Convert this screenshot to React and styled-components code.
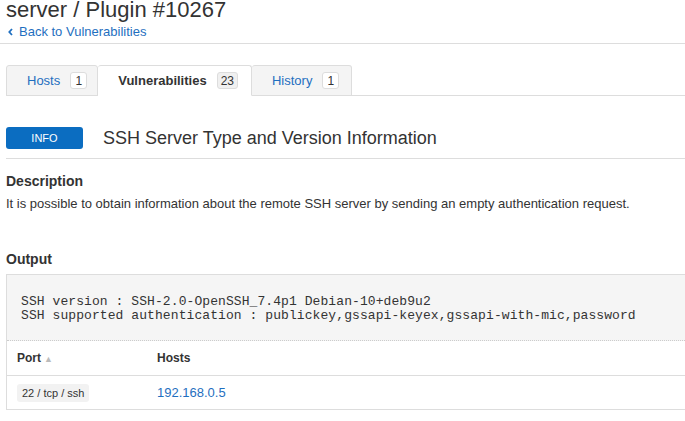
import React from "react";
import styled, { createGlobalStyle } from "styled-components";

const GlobalStyle = createGlobalStyle`
  html, body {
    margin: 0;
    padding: 0;
    background: #fff;
    font-family: "Liberation Sans", Arial, sans-serif;
    color: #333;
    overflow: hidden;
  }
`;

const Page = styled.div`
  width: 685px;
  height: 421px;
  overflow: hidden;
`;

const Header = styled.div`
  display: flow-root;
  padding: 0 6px;
  height: 44px;
  box-sizing: border-box;
  border-bottom: 1px solid #ddd;
`;

const Title = styled.h1`
  margin: -3px 0 0;
  font-size: 22px;
  line-height: 26px;
  font-weight: normal;
  color: #333;
`;

const BackLink = styled.a`
  display: flex;
  align-items: center;
  gap: 6px;
  margin-top: 1px;
  padding-left: 2px;
  font-size: 13px;
  line-height: 15px;
  color: #1f6fc0;
  text-decoration: none;
`;

const Content = styled.div`
  padding: 21px 0 0 6px;
`;

const Tabs = styled.div`
  display: flex;
  border-bottom: 1px solid #ddd;
`;

const Tab = styled.div`
  display: flex;
  align-items: center;
  height: 31px;
  margin-bottom: -1px;
  padding: 0 ${(p) => (p.$first ? "10px" : p.$active ? "13px" : "12px")} 0 20px;
  box-sizing: border-box;
  background: ${(p) => (p.$active ? "#fff" : "#f4f4f4")};
  border: 1px solid #ddd;
  border-bottom-color: ${(p) => (p.$active ? "#fff" : "#ddd")};
  border-left-width: ${(p) => (p.$first ? "1px" : "0")};
  border-radius: 3px 3px 0 0;
  font-size: 13px;
  color: ${(p) => (p.$active ? "#333" : "#1f6fc0")};
  font-weight: ${(p) => (p.$active ? "bold" : "normal")};
`;

const Count = styled.span`
  display: inline-flex;
  align-items: center;
  justify-content: center;
  margin-left: 10px;
  min-width: 17px;
  height: 17px;
  padding: 0 3px;
  box-sizing: border-box;
  border: 1px solid #ddd;
  border-radius: 3px;
  background: ${(p) => (p.$active ? "#f0f0f0" : "#fff")};
  font-size: 12px;
  font-weight: normal;
  color: #333;
`;

const VulnHeader = styled.div`
  display: flex;
  align-items: center;
  gap: 20px;
  padding: 31px 0 9px;
  border-bottom: 1px solid #ddd;
`;

const Severity = styled.span`
  display: inline-flex;
  align-items: center;
  justify-content: center;
  width: 77px;
  height: 22px;
  border-radius: 3px;
  background: #0b6dc1;
  color: #fff;
  font-size: 11px;
`;

const VulnTitle = styled.h2`
  margin: 0;
  font-size: 18px;
  font-weight: normal;
  color: #333;
`;

const SectionTitle = styled.h3`
  margin: ${(p) => p.$top || "14px"} 0 0;
  font-size: 14px;
  line-height: 16px;
  font-weight: bold;
  color: #333;
`;

const Paragraph = styled.p`
  margin: 7px 0 0;
  font-size: 13px;
  line-height: 16px;
`;

const OutputBox = styled.div`
  margin-top: 7px;
  border-top: 1px solid #ddd;
  border-left: 1px solid #ddd;
`;

const Pre = styled.pre`
  margin: 0;
  padding: 20px 14px 17px;
  background: #f5f5f5;
  font-family: "Liberation Mono", "Courier New", monospace;
  font-size: 13px;
  line-height: 14px;
  letter-spacing: 0.08px;
  color: #333;
  border-bottom: 1px dotted #ccc;
`;

const Table = styled.table`
  width: 100%;
  border-collapse: collapse;
  font-size: 12px;
`;

const Th = styled.th`
  text-align: left;
  font-weight: bold;
  padding: 0 10px;
  height: 34px;
  border-bottom: 1px solid #ddd;
  width: ${(p) => p.$width || "auto"};
  color: #333;
`;

const SortArrow = styled.span`
  color: #bbb;
  font-size: 9px;
  margin-left: 3px;
`;

const Td = styled.td`
  padding: 0 10px;
  height: 33px;
  border-bottom: 1px solid #ddd;
`;

const PortPill = styled.span`
  display: inline-block;
  padding: 3px 5px;
  background: #f2f2f2;
  border-radius: 3px;
  font-size: 11px;
  color: #333;
`;

const HostLink = styled.a`
  color: #1f6fc0;
  font-size: 13px;
  text-decoration: none;
`;

const ChevronLeft = () => (
  <svg width="5" height="8" viewBox="0 0 5 8">
    <path d="M4 1 L1.3 4 L4 7" fill="none" stroke="currentColor" strokeWidth="1.8" />
  </svg>
);

export default function App() {
  return (
    <Page>
      <GlobalStyle />
      <Header>
        <Title>server / Plugin #10267</Title>
        <BackLink href="#">
          <ChevronLeft />
          Back to Vulnerabilities
        </BackLink>
      </Header>
      <Content>
        <Tabs>
          <Tab $first>
            Hosts<Count>1</Count>
          </Tab>
          <Tab $active>
            Vulnerabilities<Count $active>23</Count>
          </Tab>
          <Tab>
            History<Count>1</Count>
          </Tab>
        </Tabs>
        <VulnHeader>
          <Severity>INFO</Severity>
          <VulnTitle>SSH Server Type and Version Information</VulnTitle>
        </VulnHeader>
        <SectionTitle>Description</SectionTitle>
        <Paragraph>
          It is possible to obtain information about the remote SSH server by
          sending an empty authentication request.
        </Paragraph>
        <SectionTitle $top="39px">Output</SectionTitle>
        <OutputBox>
          <Pre>
            {"SSH version : SSH-2.0-OpenSSH_7.4p1 Debian-10+deb9u2\nSSH supported authentication : publickey,gssapi-keyex,gssapi-with-mic,password"}
          </Pre>
          <Table>
            <thead>
              <tr>
                <Th $width="120px">
                  Port<SortArrow>▲</SortArrow>
                </Th>
                <Th>Hosts</Th>
              </tr>
            </thead>
            <tbody>
              <tr>
                <Td>
                  <PortPill>22 / tcp / ssh</PortPill>
                </Td>
                <Td>
                  <HostLink href="#">192.168.0.5</HostLink>
                </Td>
              </tr>
            </tbody>
          </Table>
        </OutputBox>
      </Content>
    </Page>
  );
}
